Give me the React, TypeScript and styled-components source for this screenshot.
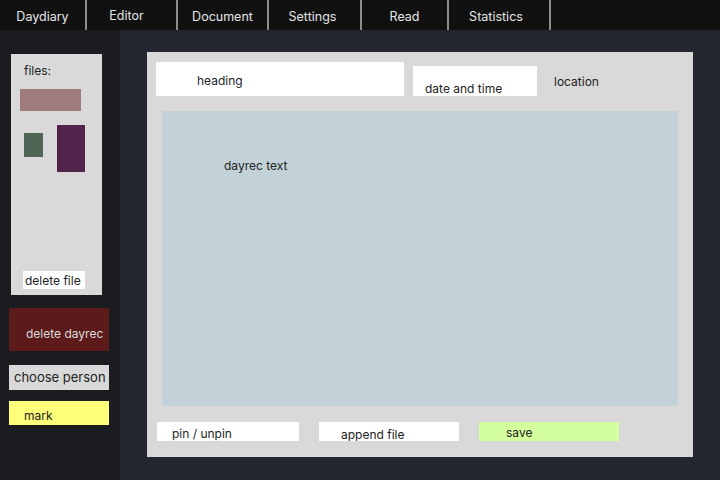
import styled, { createGlobalStyle } from "styled-components";

const GlobalStyle = createGlobalStyle`
    html, body {
        margin: 0;
        padding: 0;
        background: #1b1c20;
    }
    * {
        box-sizing: border-box;
    }
`;

const Page = styled.div`
    width: 720px;
    height: 480px;
    display: flex;
    flex-direction: column;
    font-family: Inter, "Noto Sans", sans-serif;
    font-size: 12px;
    overflow: hidden;
`;

const TopBar = styled.nav`
    height: 30px;
    flex-shrink: 0;
    display: flex;
    background: #111111;
`;

const Tab = styled.div<{ $w: number; $shift?: number; $up?: boolean }>`
    width: ${(p) => p.$w}px;
    height: 100%;
    display: flex;
    align-items: center;
    justify-content: center;
    padding-right: ${(p) => p.$shift ?? 0}px;
    padding-top: ${(p) => (p.$up ? 0 : 2)}px;
    border-right: 2px solid #8e8e8e;
    color: #e6e6e6;
    font-size: 12.5px;
`;

const Body = styled.div`
    flex: 1;
    display: flex;
`;

const Sidebar = styled.aside`
    width: 120px;
    flex-shrink: 0;
    background: #1b1c20;
    padding: 24px 0 0 9px;
    display: flex;
    flex-direction: column;
`;

const FilesPanel = styled.section`
    width: 91px;
    height: 241px;
    margin-left: 2px;
    background: #d9d9d9;
    display: flex;
    flex-direction: column;
    padding: 9px 0 6px 0;
    color: #222;
`;

const FilesLabel = styled.div`
    padding-left: 13px;
    font-size: 12px;
    line-height: 15px;
`;

const Thumb = styled.div<{ $w: number; $h: number; $c: string; $ml: number; $mt?: number }>`
    width: ${(p) => p.$w}px;
    height: ${(p) => p.$h}px;
    background: ${(p) => p.$c};
    margin-left: ${(p) => p.$ml}px;
    margin-top: ${(p) => p.$mt ?? 0}px;
    flex-shrink: 0;
`;

const ThumbRow = styled.div`
    display: flex;
    align-items: flex-start;
    margin-top: 14px;
`;

const DeleteFile = styled.button`
    margin: auto 0 0 12px;
    width: 62px;
    height: 18px;
    border: none;
    background: #ffffff;
    font: inherit;
    font-size: 12px;
    color: #222;
    padding: 0 0 0 2px;
    text-align: left;
    white-space: nowrap;
`;

const SideButton = styled.button<{ $bg: string; $fg: string; $h: number; $mt: number; $pl: number; $pt?: number; $fs?: number }>`
    width: 100px;
    height: ${(p) => p.$h}px;
    margin-top: ${(p) => p.$mt}px;
    background: ${(p) => p.$bg};
    color: ${(p) => p.$fg};
    border: none;
    font: inherit;
    font-size: ${(p) => p.$fs ?? 12}px;
    line-height: 15px;
    text-align: left;
    padding: ${(p) => p.$pt ?? 0}px 0 0 ${(p) => p.$pl}px;
    display: flex;
    align-items: ${(p) => (p.$pt ? "flex-start" : "center")};
    white-space: nowrap;
`;

const Main = styled.main`
    flex: 1;
    background: #23262e;
    padding: 22px 0 0 27px;
`;

const EditorPanel = styled.section`
    width: 546px;
    height: 405px;
    background: #d9d9d9;
    padding: 10px 15px 16px 9px;
    display: flex;
    flex-direction: column;
    color: #222;
`;

const HeaderRow = styled.div`
    display: flex;
    align-items: flex-end;
    gap: 9px;
    height: 34px;
`;

const Field = styled.div<{ $w: number; $h: number; $pl: number; $pt: number }>`
    width: ${(p) => p.$w}px;
    height: ${(p) => p.$h}px;
    background: #ffffff;
    padding: ${(p) => p.$pt}px 0 0 ${(p) => p.$pl}px;
    font-size: 12px;
    line-height: 15px;
`;

const Location = styled.div`
    align-self: flex-start;
    margin: 12px 0 0 8px;
    font-size: 12px;
    line-height: 15px;
`;

const TextArea = styled.div`
    margin: 15px 0 0 6px;
    width: 516px;
    height: 295px;
    background: #c3d2d9;
    padding: 47px 0 0 62px;
    font-size: 12px;
    line-height: 15px;
`;

const ActionRow = styled.div`
    display: flex;
    gap: 20px;
    margin: 16px 0 0 1px;
`;

const Action = styled.button<{ $bg: string; $w: number; $pl: number; $pt?: number }>`
    width: ${(p) => p.$w}px;
    height: 19px;
    border: none;
    background: ${(p) => p.$bg};
    font: inherit;
    font-size: 12px;
    line-height: 15px;
    color: #222;
    text-align: left;
    padding: ${(p) => p.$pt ?? 3}px 0 0 ${(p) => p.$pl}px;
    display: block;
    white-space: nowrap;
    overflow: hidden;
`;

const tabs: [string, number, number?][] = [
    ["Daydiary", 87],
    ["Editor", 91, 10],
    ["Document", 91],
    ["Settings", 93, 4],
    ["Read", 87],
    ["Statistics", 102, 6],
];

export default function App() {
    return (
        <Page>
            <GlobalStyle />
            <TopBar>
                {tabs.map(([label, w, shift]) => (
                    <Tab key={label} $w={w} $shift={shift} $up={label === "Editor"}>
                        {label}
                    </Tab>
                ))}
            </TopBar>
            <Body>
                <Sidebar>
                    <FilesPanel>
                        <FilesLabel>files:</FilesLabel>
                        <Thumb $w={61} $h={22} $c="#a07b7b" $ml={9} $mt={11} />
                        <ThumbRow>
                            <Thumb $w={19} $h={24} $c="#4f6656" $ml={13} $mt={8} />
                            <Thumb $w={28} $h={47} $c="#52244c" $ml={14} />
                        </ThumbRow>
                        <DeleteFile>delete file</DeleteFile>
                    </FilesPanel>
                    <SideButton $bg="#5c1a1a" $fg="#dcdcdc" $h={43} $mt={13} $pl={17} $pt={18}>
                        delete dayrec
                    </SideButton>
                    <SideButton $bg="#d9d9d9" $fg="#222" $h={25} $mt={14} $pl={5} $fs={13}>
                        choose person
                    </SideButton>
                    <SideButton $bg="#ffff7a" $fg="#222" $h={24} $mt={11} $pl={15} $pt={7}>
                        mark
                    </SideButton>
                </Sidebar>
                <Main>
                    <EditorPanel>
                        <HeaderRow>
                            <Field $w={248} $h={34} $pl={41} $pt={11}>
                                heading
                            </Field>
                            <Field $w={124} $h={30} $pl={12} $pt={15}>
                                date and time
                            </Field>
                            <Location>location</Location>
                        </HeaderRow>
                        <TextArea>dayrec text</TextArea>
                        <ActionRow>
                            <Action $bg="#ffffff" $w={142} $pl={15} $pt={3}>
                                pin / unpin
                            </Action>
                            <Action $bg="#ffffff" $w={140} $pl={22} $pt={5}>
                                append file
                            </Action>
                            <Action $bg="#d4ff9f" $w={140} $pl={27} $pt={2}>
                                save
                            </Action>
                        </ActionRow>
                    </EditorPanel>
                </Main>
            </Body>
        </Page>
    );
}
